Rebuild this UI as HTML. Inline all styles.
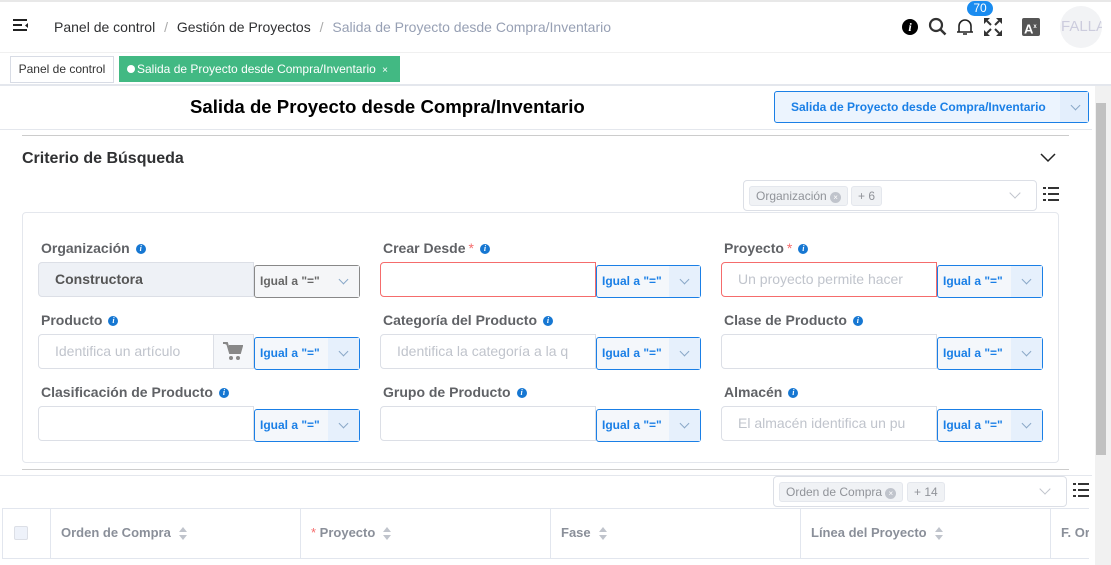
<!DOCTYPE html>
<html><head><meta charset="utf-8"><style>
*{box-sizing:border-box;margin:0;padding:0}
body{width:1111px;height:565px;overflow:hidden;background:#fff;font-family:"Liberation Sans",Arial,sans-serif;position:relative;color:#303133}
.a{position:absolute}
.lbl{position:absolute;font-size:14px;font-weight:bold;color:#606266}
.lbl i{display:inline-block;width:10px;height:10px;border-radius:50%;background:#1677d2;color:#fff;font-size:8px;font-style:italic;text-align:center;line-height:10px;margin-left:6px;vertical-align:2px;font-family:"Liberation Serif",serif}
.lbl b{color:#f56c6c;font-weight:normal;margin-left:3px}
.inp{position:absolute;height:35px;border:1px solid #dcdfe6;border-radius:4px 0 0 4px;background:#fff;font-size:14px;color:#c0c4cc;padding:0 16px;line-height:33px;white-space:nowrap;overflow:hidden}
.sel{position:absolute;height:33px;border:1px solid #1a7fe6;border-radius:3px;background:#f4f7fb;font-size:12px;font-weight:bold;color:#1a7fe6;line-height:31px;padding-left:5px}
.sel span,.chev{position:absolute;right:0;top:0;width:31px;height:31px;background:#e6f0fc}
.sel span::after,.chev::after,.dd::after{content:"";position:absolute;left:12px;top:10px;width:6px;height:6px;border-right:1px solid #8aa8c8;border-bottom:1px solid #8aa8c8;transform:rotate(45deg)}
.dd{position:absolute;right:14px;top:6px;width:14px;height:14px}
.dd::after{left:3px;top:2px;width:7px;height:7px;border-color:#c0c4cc}
.th{position:absolute;top:508px;height:51px;border-left:1px solid #e2e6ee;font-size:13px;font-weight:bold;color:#8a8f99;line-height:50px;padding-left:10px}
.srt{display:inline-block;width:8px;height:14px;margin-left:8px;vertical-align:middle;position:relative}
.srt::before{content:"";position:absolute;left:0;top:0;border:4px solid transparent;border-bottom:5px solid #c0c4cc;border-top:0}
.srt::after{content:"";position:absolute;left:0;top:8px;border:4px solid transparent;border-top:5px solid #c0c4cc;border-bottom:0}
</style></head><body>
<div class="a" style="left:0;top:0;width:1111px;height:2px;background:#e8e8e8"></div>
<svg class="a" style="left:12px;top:18px" width="18" height="16"><path d="M1 2h14M1 7h9M1 12h14" stroke="#222" stroke-width="2"/><path d="M16 5l-3 2.5 3 2.5z" fill="#222"/></svg>
<div class="a" style="left:54px;top:19px;font-size:14px;color:#303133">Panel de control <span style="color:#aaa;margin:0 5px">/</span> Gestión de Proyectos <span style="color:#aaa;margin:0 5px">/</span> <span style="color:#97a0b4">Salida de Proyecto desde Compra/Inventario</span></div>
<div class="a" style="left:902px;top:19px;width:16px;height:16px;border-radius:50%;background:#000;color:#fff;font:bold italic 12px 'Liberation Serif',serif;text-align:center;line-height:16px">i</div>
<svg class="a" style="left:928px;top:17px" width="20" height="20"><circle cx="8" cy="8" r="6" fill="none" stroke="#333" stroke-width="2.2"/><path d="M12.5 12.5l5 5" stroke="#333" stroke-width="2.5"/></svg>
<svg class="a" style="left:956px;top:17px" width="18" height="20"><path d="M3 15V9a6 6 0 0 1 12 0v6zM1 15h16M7 17h4" fill="none" stroke="#222" stroke-width="1.6"/></svg>
<div class="a" style="left:967px;top:1px;width:26px;height:15px;border-radius:8px;background:#1a8cf0;color:#fff;font-size:12px;text-align:center;line-height:15px">70</div>
<svg class="a" style="left:984px;top:18px" width="18" height="18" fill="#333"><path d="M0 0h6l-6 6zM18 0h-6l6 6zM0 18h6l-6-6zM18 18h-6l6-6z"/><path d="M3 3l4 4M15 3l-4 4M3 15l4-4M15 15l-4-4" stroke="#333" stroke-width="2"/></svg>
<div class="a" style="left:1022px;top:18px;width:18px;height:18px;background:#555;color:#fff;font-size:13px;font-weight:bold;line-height:18px;padding-left:2px;border-radius:2px">A<sup style="font-size:6px">x</sup></div>
<div class="a" style="left:1060px;top:6px;width:42px;height:42px;border-radius:50%;background:#f2f3f5;color:#ccd;font-size:15px;line-height:42px;padding-left:1px;overflow:hidden">FALLA</div>
<div class="a" style="left:0;top:52px;width:1111px;height:34px;background:#fff;border-top:1px solid #f0f0f0;border-bottom:2px solid #e4e7ed"></div>
<div class="a" style="left:10px;top:56px;width:104px;height:27px;border:1px solid #d8dce5;font-size:12px;line-height:25px;text-align:center;color:#333">Panel de control</div>
<div class="a" style="left:119px;top:56px;width:281px;height:26px;background:#42b983;color:#fff;font-size:12px;line-height:26px;padding-left:8px"><span style="display:inline-block;width:8px;height:8px;border-radius:50%;background:#fff;margin-right:2px"></span>Salida de Proyecto desde Compra/Inventario <span style="font-size:10px;margin-left:3px">×</span></div>
<div class="a" style="left:1095px;top:86px;width:16px;height:479px;background:#f1f1f1"></div>
<div class="a" style="left:1096px;top:103px;width:10px;height:352px;background:#c1c1c1"></div>
<div class="a" style="left:190px;top:96px;font-size:18.6px;font-weight:bold;color:#000">Salida de Proyecto desde Compra/Inventario</div>
<div class="a" style="left:774px;top:91px;width:315px;height:32px;border:1px solid #1a7fe6;border-radius:3px;background:#ecf4fe;font-size:12px;font-weight:bold;color:#1a7fe6;line-height:30px;padding-left:16px">Salida de Proyecto desde Compra/Inventario<span class="chev" style="width:28px;height:30px;background:#e3eefc"></span></div>
<div class="a" style="left:0;top:129px;width:1092px;height:1px;background:#e4e7ed"></div>
<div class="a" style="left:22px;top:135px;width:1047px;height:1px;background:#ccc"></div>
<div class="a" style="left:22px;top:150px;font-size:16px;font-weight:bold;color:#303133">Criterio de Búsqueda</div>
<svg class="a" style="left:1040px;top:153px" width="16" height="10"><path d="M1 1l7 7 7-7" fill="none" stroke="#222" stroke-width="1.5"/></svg>
<div class="a" style="left:743px;top:180px;width:294px;height:31px;border:1px solid #dcdfe6;border-radius:4px;font-size:12px;color:#909399">
<span class="a" style="left:5px;top:5px;height:20px;padding:0 6px;background:#f0f2f5;border:1px solid #e4e7ed;border-radius:3px;line-height:18px">Organización <span style="display:inline-block;width:11px;height:11px;border-radius:50%;background:#c0c4cc;color:#fff;font-size:8px;line-height:11px;text-align:center">×</span></span>
<span class="a" style="left:107px;top:5px;height:20px;padding:0 6px;background:#f0f2f5;border:1px solid #e4e7ed;border-radius:3px;line-height:18px">+ 6</span>
<span class="dd"></span></div>
<svg class="a" style="left:1043px;top:186px" width="16" height="16" fill="#333"><rect x="0" y="1" width="3" height="2"/><rect x="5" y="1" width="11" height="2"/><rect x="0" y="7" width="3" height="2"/><rect x="5" y="7" width="11" height="2"/><rect x="0" y="13" width="3" height="2"/><rect x="5" y="13" width="11" height="2"/></svg>
<div class="a" style="left:22px;top:212px;width:1037px;height:251px;border:1px solid #e4e7ed;border-radius:4px"></div>
<div class="lbl" style="left:41px;top:240px">Organización<i>i</i></div>
<div class="lbl" style="left:383px;top:240px">Crear Desde<b>*</b><i>i</i></div>
<div class="lbl" style="left:724px;top:240px">Proyecto<b>*</b><i>i</i></div>
<div class="lbl" style="left:41px;top:312px">Producto<i>i</i></div>
<div class="lbl" style="left:383px;top:312px">Categoría del Producto<i>i</i></div>
<div class="lbl" style="left:724px;top:312px">Clase de Producto<i>i</i></div>
<div class="lbl" style="left:41px;top:384px">Clasificación de Producto<i>i</i></div>
<div class="lbl" style="left:383px;top:384px">Grupo de Producto<i>i</i></div>
<div class="lbl" style="left:724px;top:384px">Almacén<i>i</i></div>
<div class="inp" style="left:38px;top:262px;width:216px;background:#eef1f6;color:#555;font-weight:bold">Constructora</div>
<div class="sel" style="left:254px;top:265px;width:106px;border-color:#888;color:#666;background:#f5f6f8">Igual a "="<span style="background:#f5f6f8"></span></div>
<div class="inp" style="left:380px;top:262px;width:216px;border-color:#f56c6c"></div>
<div class="sel" style="left:596px;top:265px;width:105px">Igual a "="<span></span></div>
<div class="inp" style="left:721px;top:262px;width:216px;border-color:#f56c6c">Un proyecto permite hacer</div>
<div class="sel" style="left:937px;top:265px;width:106px">Igual a "="<span></span></div>
<div class="inp" style="left:38px;top:334px;width:216px">Identifica un artículo<span class="a" style="left:174px;top:0;width:41px;height:33px;background:#f5f7fa;border-left:1px solid #dcdfe6"></span>
<svg class="a" style="left:184px;top:7px" width="20" height="19" fill="#888"><path d="M0 1h4l3 10h10l2-7H6" stroke="#888" stroke-width="2" fill="#888"/><circle cx="8" cy="16" r="2"/><circle cx="15" cy="16" r="2"/></svg></div>
<div class="sel" style="left:254px;top:337px;width:106px">Igual a "="<span></span></div>
<div class="inp" style="left:380px;top:334px;width:216px">Identifica la categoría a la q</div>
<div class="sel" style="left:596px;top:337px;width:105px">Igual a "="<span></span></div>
<div class="inp" style="left:721px;top:334px;width:216px"></div>
<div class="sel" style="left:937px;top:337px;width:106px">Igual a "="<span></span></div>
<div class="inp" style="left:38px;top:406px;width:216px"></div>
<div class="sel" style="left:254px;top:409px;width:106px">Igual a "="<span></span></div>
<div class="inp" style="left:380px;top:406px;width:216px"></div>
<div class="sel" style="left:596px;top:409px;width:105px">Igual a "="<span></span></div>
<div class="inp" style="left:721px;top:406px;width:216px">El almacén identifica un pu</div>
<div class="sel" style="left:937px;top:409px;width:106px">Igual a "="<span></span></div>
<div class="a" style="left:22px;top:469px;width:1047px;height:1px;background:#ccc"></div>
<div class="a" style="left:0;top:475px;width:1092px;height:1px;background:#e4e7ed"></div>
<div class="a" style="left:773px;top:476px;width:294px;height:31px;border:1px solid #dcdfe6;border-radius:4px;font-size:12px;color:#909399">
<span class="a" style="left:5px;top:5px;height:20px;padding:0 6px;background:#f0f2f5;border:1px solid #e4e7ed;border-radius:3px;line-height:18px">Orden de Compra <span style="display:inline-block;width:11px;height:11px;border-radius:50%;background:#c0c4cc;color:#fff;font-size:8px;line-height:11px;text-align:center">×</span></span>
<span class="a" style="left:133px;top:5px;height:20px;padding:0 6px;background:#f0f2f5;border:1px solid #e4e7ed;border-radius:3px;line-height:18px">+ 14</span>
<span class="dd"></span></div>
<svg class="a" style="left:1073px;top:482px" width="16" height="16" fill="#333"><rect x="0" y="1" width="3" height="2"/><rect x="5" y="1" width="11" height="2"/><rect x="0" y="7" width="3" height="2"/><rect x="5" y="7" width="11" height="2"/><rect x="0" y="13" width="3" height="2"/><rect x="5" y="13" width="11" height="2"/></svg>
<div class="a" style="left:2px;top:508px;width:1087px;height:51px;border-top:1px solid #e2e6ee;border-bottom:1px solid #e2e6ee"></div>
<div class="th" style="left:2px;width:48px"><span class="a" style="left:11px;top:18px;width:14px;height:14px;border:1px solid #dcdfe6;background:#eef2fa;border-radius:2px"></span></div>
<div class="th" style="left:50px;width:250px">Orden de Compra<span class="srt"></span></div>
<div class="th" style="left:300px;width:250px"><b style="color:#f56c6c;font-weight:normal">*</b> Proyecto<span class="srt"></span></div>
<div class="th" style="left:550px;width:250px">Fase<span class="srt"></span></div>
<div class="th" style="left:800px;width:250px">Línea del Proyecto<span class="srt"></span></div>
<div class="th" style="left:1050px;width:39px;overflow:hidden;white-space:nowrap">F. Or</div>
</body></html>
